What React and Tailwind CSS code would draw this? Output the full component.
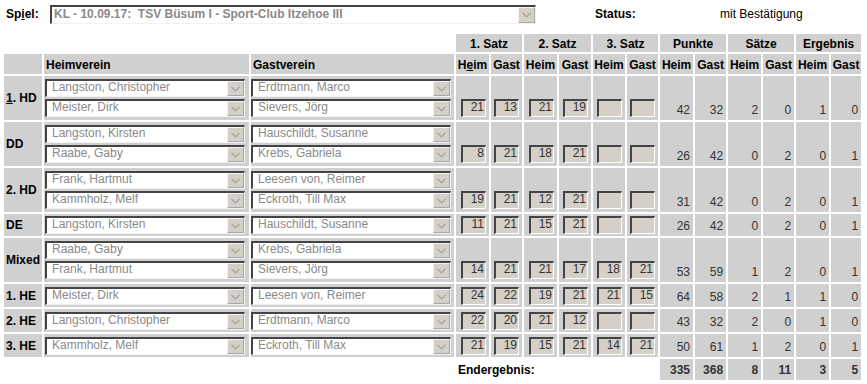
import React from 'react';

const rows = [
  { label: <><u>1</u>. HD</>, heim: ['Langston, Christopher', 'Meister, Dirk'], gast: ['Erdtmann, Marco', 'Sievers, Jörg'], sets: ['21', '13', '21', '19', '', ''], nums: ['42', '32', '2', '0', '1', '0'] },
  { label: 'DD', heim: ['Langston, Kirsten', 'Raabe, Gaby'], gast: ['Hauschildt, Susanne', 'Krebs, Gabriela'], sets: ['8', '21', '18', '21', '', ''], nums: ['26', '42', '0', '2', '0', '1'] },
  { label: '2. HD', heim: ['Frank, Hartmut', 'Kammholz, Melf'], gast: ['Leesen von, Reimer', 'Eckroth, Till Max'], sets: ['19', '21', '12', '21', '', ''], nums: ['31', '42', '0', '2', '0', '1'] },
  { label: 'DE', h22: true, heim: ['Langston, Kirsten'], gast: ['Hauschildt, Susanne'], sets: ['11', '21', '15', '21', '', ''], nums: ['26', '42', '0', '2', '0', '1'] },
  { label: 'Mixed', heim: ['Raabe, Gaby', 'Frank, Hartmut'], gast: ['Krebs, Gabriela', 'Sievers, Jörg'], sets: ['14', '21', '21', '17', '18', '21'], nums: ['53', '59', '1', '2', '0', '1'] },
  { label: '1. HE', heim: ['Meister, Dirk'], gast: ['Leesen von, Reimer'], sets: ['24', '22', '19', '21', '21', '15'], nums: ['64', '58', '2', '1', '1', '0'] },
  { label: '2. HE', heim: ['Langston, Christopher'], gast: ['Erdtmann, Marco'], sets: ['22', '20', '21', '12', '', ''], nums: ['43', '32', '2', '0', '1', '0'] },
  { label: '3. HE', heim: ['Kammholz, Melf'], gast: ['Eckroth, Till Max'], sets: ['21', '19', '15', '21', '14', '21'], nums: ['50', '61', '1', '2', '0', '1'] },
];

const totals = ['335', '368', '8', '11', '3', '5'];

const COLS = ['w-[38px]', 'w-[205px]', 'w-[203px]', 'w-[33px]', 'w-[31px]', 'w-[33px]', 'w-[32px]', 'w-[32px]', 'w-[31px]', 'w-[33px]', 'w-[31px]', 'w-[33px]', 'w-[31px]', 'w-[33px]', 'w-[30px]'];

function Chevron() {
  return (
    <svg width="9" height="6" viewBox="0 0 9 6" className="block">
      <polyline points="0.5,0.8 4.5,4.8 8.5,0.8" fill="none" stroke="#9a9a9a" strokeWidth="1.1" />
    </svg>
  );
}

function Arrow() {
  return (
    <div className="flex h-full w-[17px] shrink-0 items-center justify-center border border-t-[#f4f4f4] border-l-[#f4f4f4] border-b-[#a8a8a8] border-r-[#a8a8a8] bg-[#d4d0c8]">
      <Chevron />
    </div>
  );
}

function Select({ text }) {
  return (
    <div className="flex h-[18px] w-[200px] border-t-2 border-l-2 border-b border-r border-t-[#444444] border-l-[#444444] border-b-[#f2f2f2] border-r-[#f2f2f2] bg-white">
      <div className="flex-1 overflow-hidden whitespace-nowrap pl-[5px] text-[12px] leading-[13px] text-[#8a8a8a]">{text}</div>
      <Arrow />
    </div>
  );
}

function Score({ v }) {
  return (
    <div className="ml-auto h-[18px] w-[25px] border-t-2 border-l-2 border-b border-r border-t-[#444444] border-l-[#444444] border-b-white border-r-white bg-[#d4d0c8] pr-[1px] text-right text-[12px] leading-[13px] text-[#333333]">
      {v}
    </div>
  );
}

export default function App() {
  return (
    <div className="w-[867px] bg-white font-['Liberation_Sans',Arial,sans-serif] text-[12px] leading-[14px] text-black">
      <div className="flex h-[32px] items-start pl-[6px] pt-[5px]">
        <div className="w-[44px] pt-[2px] font-bold leading-[15px]">
          Sp<u>i</u>el:
        </div>
        <div className="flex h-[19px] w-[486px] border-t-2 border-l-2 border-b border-r border-t-[#444444] border-l-[#444444] border-b-[#f2f2f2] border-r-[#f2f2f2] bg-white">
          <div className="flex-1 whitespace-pre pl-[2px] font-bold leading-[15px] text-[#8a8a8a]">KL - 10.09.17:  TSV Büsum I - Sport-Club Itzehoe III</div>
          <Arrow />
        </div>
        <div className="ml-[59px] w-[125px] pt-[2px] font-bold leading-[15px]">Status:</div>
        <div className="pt-[2px] leading-[15px]">mit Bestätigung</div>
      </div>

      <div className="pl-[2px]">
        <table className="w-[861px] table-fixed border-separate border-spacing-[2px]">
          <colgroup>
            {COLS.map((c, i) => (
              <col key={i} className={c} />
            ))}
          </colgroup>
          <tbody>
            <tr className="h-[18px]">
              <td className="p-0" />
              <td className="p-0" />
              <td className="p-0" />
              <td colSpan={2} className="bg-[#d0d0d0] p-0 pt-[3px] text-center align-top font-bold">1. Satz</td>
              <td colSpan={2} className="bg-[#d0d0d0] p-0 pt-[3px] text-center align-top font-bold">2. Satz</td>
              <td colSpan={2} className="bg-[#d0d0d0] p-0 pt-[3px] text-center align-top font-bold">3. Satz</td>
              <td colSpan={2} className="bg-[#d0d0d0] p-0 pt-[3px] text-center align-top font-bold">Punkte</td>
              <td colSpan={2} className="bg-[#d0d0d0] p-0 pt-[3px] text-center align-top font-bold">Sätze</td>
              <td colSpan={2} className="bg-[#d0d0d0] p-0 pt-[3px] text-center align-top font-bold">Ergebnis</td>
            </tr>
            <tr className="h-[20px]">
              <td className="bg-[#d0d0d0] p-0" />
              <td className="bg-[#d0d0d0] p-0 pl-[2px] pt-[4px] text-left align-top font-bold">Heimverein</td>
              <td className="bg-[#d0d0d0] p-0 pl-[2px] pt-[4px] text-left align-top font-bold">Gastverein</td>
              <td className="bg-[#d0d0d0] p-0 pt-[4px] text-center align-top font-bold">H<u>e</u>im</td>
              <td className="bg-[#d0d0d0] p-0 pt-[4px] text-center align-top font-bold">Gast</td>
              <td className="bg-[#d0d0d0] p-0 pt-[4px] text-center align-top font-bold">Heim</td>
              <td className="bg-[#d0d0d0] p-0 pt-[4px] text-center align-top font-bold">Gast</td>
              <td className="bg-[#d0d0d0] p-0 pt-[4px] text-center align-top font-bold">Heim</td>
              <td className="bg-[#d0d0d0] p-0 pt-[4px] text-center align-top font-bold">Gast</td>
              <td className="bg-[#d0d0d0] p-0 pt-[4px] text-center align-top font-bold">Heim</td>
              <td className="bg-[#d0d0d0] p-0 pt-[4px] text-center align-top font-bold">Gast</td>
              <td className="bg-[#d0d0d0] p-0 pt-[4px] text-center align-top font-bold">Heim</td>
              <td className="bg-[#d0d0d0] p-0 pt-[4px] text-center align-top font-bold">Gast</td>
              <td className="bg-[#d0d0d0] p-0 pt-[4px] text-center align-top font-bold">Heim</td>
              <td className="bg-[#d0d0d0] p-0 pt-[4px] text-center align-top font-bold">Gast</td>
            </tr>

            {rows.map((r, i) => {
              const dbl = r.heim.length === 2;
              const trH = dbl ? 'h-[44px]' : r.h22 ? 'h-[22px]' : 'h-[23px]';
              const pb = dbl ? 'pb-[3px]' : r.h22 ? 'pb-[2px]' : 'pb-[2px]';
              return (
                <tr key={i} className={trH}>
                  <td className="bg-[#d0d0d0] p-0 pl-[2px] align-middle font-bold whitespace-nowrap">{r.label}</td>
                  <td className={`bg-[#d0d0d0] p-0 pl-[1px] align-bottom ${pb}`}>
                    <div className="flex flex-col gap-[2px]">
                      {r.heim.map((n) => (
                        <Select key={n} text={n} />
                      ))}
                    </div>
                  </td>
                  <td className={`bg-[#d0d0d0] p-0 align-bottom ${pb}`}>
                    <div className="flex flex-col gap-[2px]">
                      {r.gast.map((n) => (
                        <Select key={n} text={n} />
                      ))}
                    </div>
                  </td>
                  {r.sets.map((v, j) => (
                    <td key={'s' + j} className={`bg-[#d0d0d0] p-0 pr-[3px] align-bottom ${pb}`}>
                      <Score v={v} />
                    </td>
                  ))}
                  {r.nums.map((v, j) => (
                    <td key={'n' + j} className="bg-[#d0d0d0] p-0 pr-[3px] pb-[3px] text-right align-bottom text-[#333333]">
                      {v}
                    </td>
                  ))}
                </tr>
              );
            })}

            <tr className="h-[21px]">
              <td className="p-0" />
              <td className="p-0" />
              <td className="p-0" />
              <td colSpan={6} className="p-0 pl-[2px] text-left align-middle font-bold">Endergebnis:</td>
              {totals.map((v, j) => (
                <td key={j} className="bg-[#d0d0d0] p-0 pr-[3px] text-right align-middle font-bold text-[#333333]">
                  {v}
                </td>
              ))}
            </tr>
          </tbody>
        </table>
      </div>
    </div>
  );
}
